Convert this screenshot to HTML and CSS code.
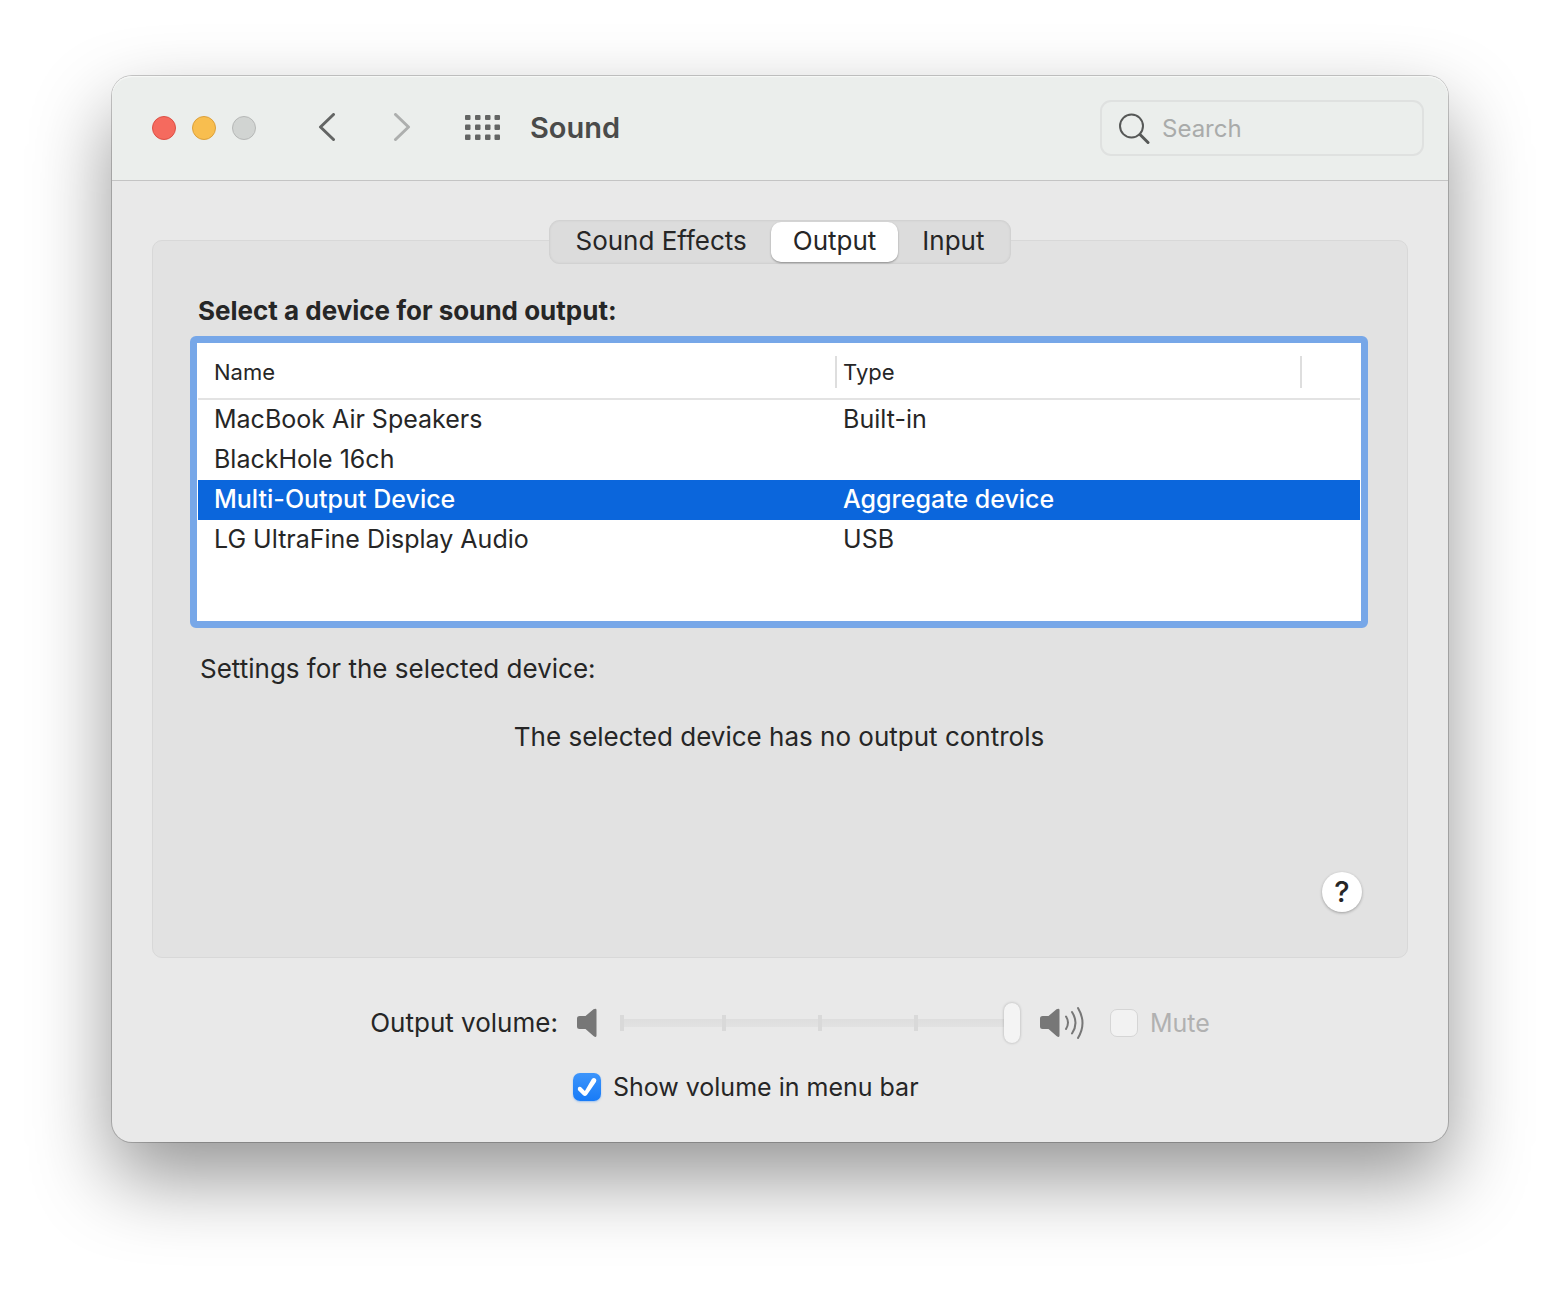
FILE: index.html
```
<!DOCTYPE html>
<html lang="en">
<head>
    <meta charset="UTF-8">
    <meta name="viewport" content="width=device-width, initial-scale=1.0">
    <title>Sound</title>
    <link rel="stylesheet" href="styles.css">
</head>
<body>
    <div class="window">
        <header class="toolbar">
            <div class="lights">
                <button class="light red" aria-label="Close"></button>
                <button class="light yellow" aria-label="Minimize"></button>
                <button class="light gray" aria-label="Zoom" disabled></button>
            </div>
            <div class="nav">
                <button class="icon-button" aria-label="Back">
                    <svg width="20" height="30" viewBox="0 0 20 30"><path d="M17.500 1.500 L4.500 14 L17.500 26.500"/></svg>
                </button>
                <button class="icon-button forward" aria-label="Forward" disabled>
                    <svg width="20" height="30" viewBox="0 0 20 30"><path d="M3.500 1.500 L16.500 14 L3.500 26.500"/></svg>
                </button>
            </div>
            <button class="icon-button show-all" aria-label="Show all">
                <svg width="36" height="26" viewBox="0 0 36 26">
                    <rect x="0" y="0" width="5.500" height="5" rx="1"/><rect x="10" y="0" width="5.500" height="5" rx="1"/><rect x="20" y="0" width="5.500" height="5" rx="1"/><rect x="29.500" y="0" width="5.500" height="5" rx="1"/>
                    <rect x="0" y="9.500" width="5.500" height="5.500" rx="1"/><rect x="10" y="9.500" width="5.500" height="5.500" rx="1"/><rect x="20" y="9.500" width="5.500" height="5.500" rx="1"/><rect x="29.500" y="9.500" width="5.500" height="5.500" rx="1"/>
                    <rect x="0" y="19.500" width="5.500" height="5.500" rx="1"/><rect x="10" y="19.500" width="5.500" height="5.500" rx="1"/><rect x="20" y="19.500" width="5.500" height="5.500" rx="1"/><rect x="29.500" y="19.500" width="5.500" height="5.500" rx="1"/>
                </svg>
            </button>
            <h1>Sound</h1>
            <label class="search">
                <svg width="32" height="32" viewBox="0 0 32 32"><circle cx="13.500" cy="13" r="11.500"/><path class="handle" d="M22 21.500 L30 29.500"/></svg>
                <input type="search" placeholder="Search" aria-label="Search">
            </label>
        </header>

        <main class="content">
            <div class="tabs">
                <button class="tab">Sound Effects</button>
                <button class="tab active">Output</button>
                <button class="tab">Input</button>
            </div>
            <section class="panel">
                <h2>Select a device for sound output:</h2>
                <div class="device-list">
                    <table>
                        <thead>
                            <tr><th class="col-name">Name</th><th class="col-type">Type</th><th></th></tr>
                        </thead>
                        <tbody>
                            <tr><td>MacBook Air Speakers</td><td>Built-in</td><td></td></tr>
                            <tr><td>BlackHole 16ch</td><td></td><td></td></tr>
                            <tr class="selected"><td>Multi-Output Device</td><td>Aggregate device</td><td></td></tr>
                            <tr><td>LG UltraFine Display Audio</td><td>USB</td><td></td></tr>
                        </tbody>
                    </table>
                </div>
                <p class="settings-title">Settings for the selected device:</p>
                <p class="message">The selected device has no output controls</p>
                <button class="help" aria-label="Help">?</button>
            </section>

            <div class="volume">
                <label for="volume">Output volume:</label>
                <div class="volume-controls">
                    <svg class="speaker" width="20" height="30" viewBox="0 0 20 30"><path class="cone" d="M2.500 8 H8.500 L16.500 1.200 Q19.500 0 19.500 2 V27.500 Q19.500 30 16.500 28 L8.500 21 H2.500 Q0 21 0 18.500 V10.500 Q0 8 2.500 8 Z"/></svg>
                    <input type="range" id="volume" min="0" max="100" value="100" disabled>
                    <svg class="speaker" width="46" height="34" viewBox="0 0 46 34"><path class="cone" d="M2.500 10 H8.500 L16.500 3.200 Q19.500 2 19.500 4 V29.500 Q19.500 32 16.500 30 L8.500 23 H2.500 Q0 23 0 20.500 V12.500 Q0 10 2.500 10 Z"/><path class="wave" d="M26 10.500 Q30 16.500 26 23"/><path class="wave" d="M32 6 Q39 17 32 27.500"/><path class="wave" d="M38 2 Q47 17 38 32"/></svg>
                    <label class="check mute"><input type="checkbox" disabled>Mute</label>
                </div>
                <label class="check menu-bar"><input type="checkbox" checked>Show volume in menu bar</label>
            </div>
        </main>
    </div>
</body>
</html>
```
FILE: styles.css
```
* {
    box-sizing: border-box;
}
body {
    margin: 0;
    padding: 76px 112px 148px;
    background-color: #fff;
    color: #262626;
    font-family: Inter, "Liberation Sans", sans-serif;
    font-size: 26px;
    line-height: 40px;
}
h1, h2, p {
    margin: 0;
}
button, input {
    font: inherit;
    color: inherit;
}
button {
    padding: 0;
    border: none;
    background: none;
}
svg {
    display: block;
}
.window {
    border-radius: 20px;
    background-color: #e9e9e9;
    box-shadow: 0 0 0 1px rgba(0,0,0,0.2), 0 36px 80px rgba(0,0,0,0.42);
}

/* toolbar */
.toolbar {
    display: flex;
    align-items: center;
    height: 105px;
    padding: 0 24px 0 40px;
    border-bottom: 1px solid #c4c4c4;
    border-radius: 20px 20px 0 0;
    background-color: #ebeeec;
    box-shadow: inset 0 1px 1px #f8f9f8;
}
.lights {
    display: flex;
    gap: 16px;
}
.light {
    width: 24px;
    height: 24px;
    border: 1px solid;
    border-radius: 50%;
}
.red {
    background-color: #f56a5e;
    border-color: #dc5045;
}
.yellow {
    background-color: #f8be4f;
    border-color: #dca03b;
}
.gray {
    background-color: #d1d4d2;
    border-color: #b6b8b7;
}
.nav {
    display: flex;
    gap: 56px;
    margin-left: 60px;
}
.icon-button path {
    fill: none;
    stroke: #636564;
    stroke-width: 3;
    stroke-linecap: round;
    stroke-linejoin: round;
}
.forward path {
    stroke: #adafae;
}
.show-all {
    margin-left: 53px;
    fill: #636564;
}
h1 {
    margin-left: 29px;
    color: #4a4b4a;
    font-size: 29px;
    font-weight: 600;
}
.search {
    display: flex;
    align-items: center;
    gap: 12px;
    width: 324px;
    height: 56px;
    margin-left: auto;
    padding: 2px 16px 0;
    border: 2px solid #dfe1e0;
    border-radius: 11px;
}
.search svg {
    flex: none;
    fill: none;
    stroke: #565857;
    stroke-width: 2;
}
.search .handle {
    stroke-width: 3;
    stroke-linecap: round;
}
.search input {
    width: 100%;
    padding: 0;
    border: none;
    outline: none;
    background: none;
    font-size: 24px;
}
.search input::placeholder {
    color: #a9abaa;
}

/* tabs and panel */
.content {
    padding: 39px 40px 35px;
}
.tabs {
    position: relative;
    display: flex;
    width: fit-content;
    height: 44px;
    margin: 0 auto -24px;
    padding: 2px;
    border-radius: 11px;
    background-color: #dcdcdc;
    box-shadow: inset 0 0 3px rgba(0,0,0,0.12);
}
.tab {
    padding: 0 24px 2px;
    border-radius: 10px;
    white-space: nowrap;
    line-height: 38px;
}
.tab.active {
    padding: 0 22px 2px;
    background-color: #fff;
    box-shadow: 0 1px 2px rgba(0,0,0,0.35);
}
.panel {
    display: flex;
    flex-direction: column;
    padding: 50px 39px 45px 37px;
    border: 1px solid #d8d8d8;
    border-radius: 10px;
    background-color: #e2e2e2;
}
h2 {
    padding-left: 8px;
    font-size: 26px;
    font-weight: 700;
}
.device-list {
    min-height: 292px;
    margin-top: 5px;
    padding: 1px;
    border: 7px solid #77a7e8;
    border-radius: 6px;
    background-color: #fff;
    font-size: 25px;
}
table {
    width: 100%;
    border-spacing: 0;
    table-layout: fixed;
}
th, td {
    height: 40px;
    padding: 0 0 0 6px;
    text-align: left;
    line-height: 38px;
    vertical-align: top;
}
th {
    height: 56px;
    padding-top: 2px;
    border-bottom: 2px solid #e3e3e3;
    font-size: 22px;
    font-weight: 400;
    vertical-align: middle;
}
th:first-child, td:first-child {
    padding-left: 16px;
}
.col-name {
    width: 55%;
}
.col-type {
    width: 40%;
}
.col-name, .col-type {
    background: linear-gradient(#dedede, #dedede) right bottom 10px / 2px 32px no-repeat;
}
.selected td {
    background-color: #0b66dc;
    color: #fff;
    font-weight: 500;
}
.settings-title {
    margin-top: 21px;
    padding-left: 10px;
}
.message {
    margin-top: 28px;
    text-align: center;
}
.help {
    align-self: flex-end;
    width: 40px;
    height: 40px;
    margin: 115px 6px 0 0;
    border-radius: 50%;
    background-color: #fff;
    box-shadow: 0 1px 3px rgba(0,0,0,0.3);
    font-size: 29px;
    font-weight: 500;
}

/* volume */
.volume {
    display: grid;
    grid-template-columns: auto auto;
    justify-content: center;
    gap: 24px 15px;
    margin-top: 45px;
    padding-left: 20px;
}
.volume-controls {
    display: flex;
    align-items: center;
    padding-left: 4px;
}
.cone {
    fill: #777;
}
.wave {
    fill: none;
    stroke: #777;
    stroke-width: 2;
    stroke-linecap: round;
}
input[type="range"] {
    appearance: none;
    width: 400px;
    height: 40px;
    margin: 0 20px 0 23px;
    background:
        linear-gradient(#d9d9d9, #d9d9d9) 0 center / 4px 16px no-repeat,
        linear-gradient(#d9d9d9, #d9d9d9) 102px center / 4px 16px no-repeat,
        linear-gradient(#d9d9d9, #d9d9d9) 198px center / 4px 16px no-repeat,
        linear-gradient(#d9d9d9, #d9d9d9) 294px center / 4px 16px no-repeat,
        linear-gradient(#dedede, #e2e2e2) 0 center / 390px 8px no-repeat;
}
input[type="range"]::-webkit-slider-thumb {
    appearance: none;
    width: 16px;
    height: 40px;
    border-radius: 8px;
    background-color: #f4f4f4;
    box-shadow: 0 0 3px rgba(0,0,0,0.25);
}
.check {
    display: flex;
    align-items: center;
    gap: 12px;
    font-size: 25px;
}
.check input {
    appearance: none;
    width: 28px;
    height: 28px;
    margin: 0;
    border: 1px solid #d5d5d5;
    border-radius: 7px;
    background-color: #f2f2f2;
}
.check input:checked {
    display: grid;
    place-items: center;
    border: none;
    background: linear-gradient(#3d95fb, #187bf7);
    box-shadow: 0 1px 2px rgba(24,123,247,0.35);
}
/* tick mark */
.check input:checked::before {
    content: "";
    width: 20px;
    height: 20px;
    background-color: #fff;
    clip-path: path("M1 11 Q2 9 4 10 L8 14 L15 2 Q17 0 19 2 Q20 3 19 5 L10 18 Q8 20 6 18 L1 13 Z");
}
.mute {
    margin-left: 24px;
    color: #b1b1b1;
}
.menu-bar {
    grid-column: 2;
}
```
